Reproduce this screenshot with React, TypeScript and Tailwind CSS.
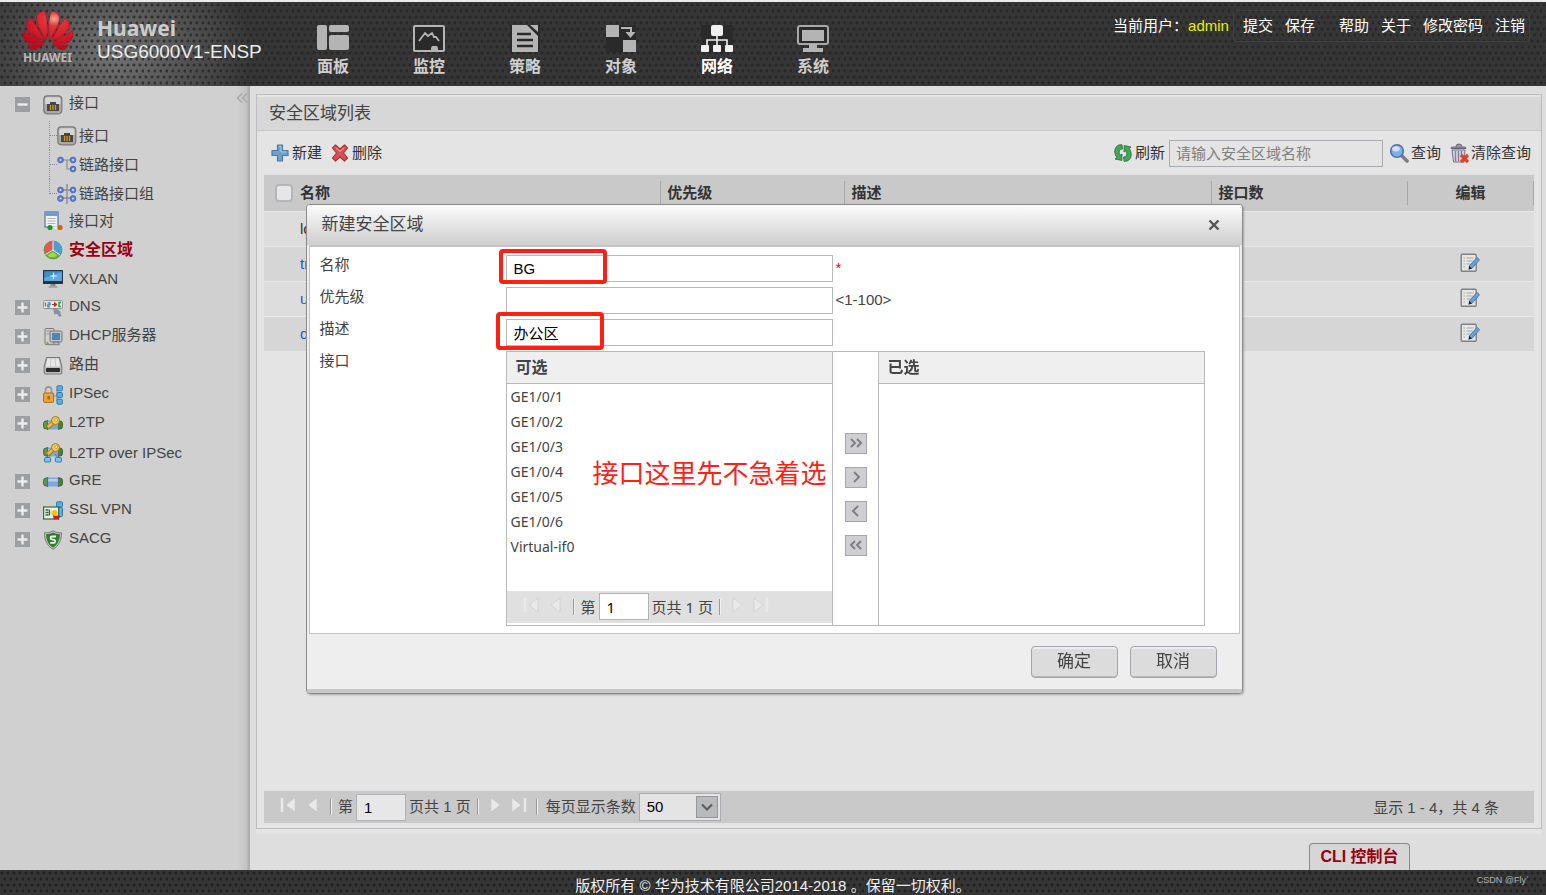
import React, { ReactNode } from "react";

const DOTS =
  "bg-[#353536] bg-[radial-gradient(circle_at_2px_3px,#202020_1px,transparent_2px),radial-gradient(circle_at_5px_9px,#202020_1px,transparent_2px)] bg-[length:6px_12px]";
const HEADER_DOTS =
  "bg-[#363637] bg-[radial-gradient(circle_at_2px_3px,#202020b0_1px,transparent_2px),radial-gradient(circle_at_5px_9px,#202020b0_1px,transparent_2px),radial-gradient(ellipse_140px_110px_at_112px_50px,#747474,transparent)] bg-[length:6px_12px,6px_12px,100%_100%]";

/* ---------- top navigation drawings ---------- */

function HuaweiLogo() {
  return (
    <svg width="50" height="39" viewBox="0 2.9 24 18.2" preserveAspectRatio="none" aria-hidden="true">
      <defs>
        <radialGradient id="petal" cx="0.62" cy="0.2" r="0.75">
          <stop offset="0" stopColor="#f3a78e" />
          <stop offset="0.25" stopColor="#e0343a" />
          <stop offset="1" stopColor="#c2071a" />
        </radialGradient>
      </defs>
      <path
        fill="url(#petal)"
        stroke="#c2071a"
        strokeWidth="0.3"
        d="M3.67 6.14S1.82 7.91 1.72 9.78v.35c.08 1.51 1.22 2.4 1.22 2.4 1.83 1.79 6.26 4.04 7.3 4.55 0 0 .06.03.1-.01l.02-.04v-.04C7.52 10.8 3.67 6.14 3.67 6.14zM9.65 18.6c-.02-.08-.1-.08-.1-.08l-7.38.26c.8 1.43 2.15 2.53 3.56 2.2.96-.25 3.16-1.78 3.88-2.3.06-.05.04-.09.04-.09zm.08-.78C6.49 15.63.21 12.28.21 12.28c-.15.46-.2.9-.21 1.3v.07c0 1.07.4 1.82.4 1.82.8 1.69 2.34 2.2 2.34 2.2.7.3 1.4.31 1.4.31.12.02 4.4 0 5.54 0 .05 0 .08-.05.08-.05v-.06c0-.03-.03-.05-.03-.05zM9.06 3.19a3.42 3.42 0 00-2.57 3.15v.41c.03.6.16 1.05.16 1.05.66 2.9 3.86 7.65 4.55 8.65.05.05.1.03.1.03a.1.1 0 00.06-.1c1.06-10.6-1.11-13.42-1.11-13.42-.32.02-1.19.23-1.19.23zm8.299 2.27s-.49-1.8-2.44-2.28c0 0-.57-.14-1.17-.22 0 0-2.18 2.81-1.12 13.43.01.07.06.08.06.08.07.03.1-.03.1-.03.72-1.03 3.9-5.76 4.55-8.64 0 0 .36-1.4.02-2.34zm-2.92 13.07s-.07 0-.09.05c0 0-.01.07.03.1.7.51 2.85 2 3.88 2.3 0 0 .16.05.43.06h.14c.69-.02 1.9-.37 3-2.26l-7.4-.25zm7.83-8.41c.14-2.06-1.94-3.97-1.94-3.98 0 0-3.85 4.66-6.67 10.8 0 0-.03.08.02.13l.04.01h.06c1.06-.53 5.46-2.77 7.28-4.54 0 0 1.15-.93 1.21-2.42zm1.52 2.14s-6.28 3.37-9.52 5.55c0 0-.05.04-.03.11 0 0 .03.06.07.06 1.16 0 5.56 0 5.67-.02 0 0 .57-.02 1.27-.29 0 0 1.56-.5 2.37-2.27 0 0 .73-1.45.17-3.14z"
      />
    </svg>
  );
}

function NavSvg({ children }: { children: ReactNode }) {
  return (
    <svg width="34" height="28" viewBox="0 0 34 28" fill="#b4b4b4" aria-hidden="true">
      {children}
    </svg>
  );
}

const navItems = [
  {
    label: "面板",
    icon: (
      <NavSvg>
        <rect x="1" y="0" width="10" height="25" rx="2" />
        <rect x="13" y="0" width="20" height="7" rx="2" />
        <rect x="13" y="10" width="20" height="15" rx="2" />
      </NavSvg>
    ),
  },
  {
    label: "监控",
    icon: (
      <NavSvg>
        <rect x="2" y="1" width="30" height="25" rx="1" fill="#2a2a2a" stroke="#b4b4b4" strokeWidth="2" />
        <path d="M7 16l6-8 3 3 4-3 2 4h2l3 4" fill="none" stroke="#b4b4b4" strokeWidth="1.8" />
        <path d="M19 25v-2l1-2h5l1 2v2z" />
      </NavSvg>
    ),
  },
  {
    label: "策略",
    icon: (
      <NavSvg>
        <rect x="2" y="0" width="30" height="27" fill="#2a2a2a" />
        <path d="M4 0h15l11 11v16H4zM22 0h8v7z" />
        <path d="M9 9h14M9 15h16M9 21h16" stroke="#2a2a2a" strokeWidth="2.4" />
      </NavSvg>
    ),
  },
  {
    label: "对象",
    icon: (
      <NavSvg>
        <rect x="2" y="0" width="30" height="27" fill="#2a2a2a" />
        <rect x="2" y="0" width="13" height="12" />
        <rect x="19" y="15" width="13" height="12" />
        <path d="M17 2h11v5h3.500l-5 6-5-6H26V4h-9z" />
      </NavSvg>
    ),
  },
  {
    label: "网络",
    active: true,
    icon: (
      <NavSvg>
        <rect x="1" y="0" width="32" height="27" fill="#2a2a2a" />
        <g fill="#f0f0f0">
          <rect x="11" y="0" width="12" height="11" rx="2" />
          <rect x="1" y="20" width="8" height="7" rx="1" />
          <rect x="13" y="20" width="8" height="7" rx="1" />
          <rect x="25" y="20" width="8" height="7" rx="1" />
        </g>
        <path d="M17 10v11M7 21v-6h20v6" fill="none" stroke="#f0f0f0" strokeWidth="1.6" />
      </NavSvg>
    ),
  },
  {
    label: "系统",
    icon: (
      <NavSvg>
        <rect x="2" y="1" width="30" height="18" rx="2" fill="#2a2a2a" stroke="#a8a8a8" strokeWidth="2" />
        <rect x="6" y="5" width="22" height="11" />
        <path d="M13 19h8v4h6v4H7v-4h6z" />
      </NavSvg>
    ),
  },
];

/* ---------- sidebar drawings ---------- */

function Icon({ children }: { children: ReactNode }) {
  return (
    <svg className="shrink-0" width="20" height="20" viewBox="0 0 20 20" aria-hidden="true">
      {children}
    </svg>
  );
}

const PortIcon = () => (
  <Icon>
    <rect x="0.800" y="0.800" width="18" height="18" rx="3.500" fill="#a9a9a9" stroke="#7a7a7a" strokeWidth="1.2" />
    <path d="M2.200 9V4.200a2 2 0 012-2h11.200a2 2 0 012 2V9z" fill="#d6d6d6" />
    <path d="M4 9h3V7h6v2h3v7H4z" fill="#4a4640" />
    <path d="M7.500 10v5M10 10v5M12.500 10v5" stroke="#c99a2c" strokeWidth="1.3" />
  </Icon>
);

const Node = ({ x, y }: { x: number; y: number }) => (
  <g>
    <circle cx={x} cy={y} r="2.900" fill="#5b7fd6" stroke="#4765b4" strokeWidth="0.8" />
    <circle cx={x} cy={y} r="1.100" fill="#cfdcff" />
  </g>
);

const LinkIcon = () => (
  <Icon>
    <path d="M4 5h12M10 5v9h6" fill="none" stroke="#8c8c8c" strokeWidth="1.2" />
    <Node x={3.5} y={5} />
    <Node x={16} y={5} />
    <Node x={16} y={14} />
  </Icon>
);

const LinkGroupIcon = () => (
  <Icon>
    <path d="M10 0v20M5 6h10M5 14h10" fill="none" stroke="#8c8c8c" strokeWidth="1.4" />
    <Node x={3.5} y={6} />
    <Node x={16} y={6} />
    <Node x={3.5} y={14.5} />
    <Node x={16} y={14.5} />
  </Icon>
);

const PairIcon = () => (
  <Icon>
    <rect x="2" y="1" width="13" height="15" fill="#f2f2f2" stroke="#5b7fab" strokeWidth="1.3" />
    <rect x="2" y="1" width="13" height="4" fill="#6f9bcf" />
    <path d="M4.500 7.500h8M4.500 10h8M4.500 12.500h8" stroke="#b5b5b5" />
    <path d="M7 16.500h9" stroke="#f4f4f4" strokeWidth="2" />
    <circle cx="7" cy="16.500" r="2.600" fill="#109a2a" />
    <circle cx="17" cy="16.500" r="2.600" fill="#d2640c" />
  </Icon>
);

const PieIcon = () => (
  <Icon>
    <circle cx="10" cy="10" r="9" fill="#5fb530" stroke="#4c7a3a" strokeWidth="0.6" />
    <path d="M10 10L2.600 14.500A9 9 0 0110 1z" fill="#df5a4e" />
    <path d="M10 10V1a9 9 0 017.200 14.200z" fill="#4b9fd8" />
    <path d="M10 10V1M10 10l-7.500 4.500M10 10l7 5" stroke="#e9eef0" strokeWidth="1" />
    <path d="M4.500 15.500l5.500-3.500 4 3.500a7 7 0 01-9.500 0z" fill="#a3d94c" />
  </Icon>
);

const ScreenIcon = () => (
  <Icon>
    <rect x="0" y="1" width="20" height="14" rx="0.500" fill="#26343f" />
    <rect x="1.200" y="2.200" width="17.600" height="9.800" fill="#3d8fcb" />
    <path d="M1.200 9L18.800 3v9H1.200z" fill="#5aabe0" />
    <path d="M10.500 3.800v6.400M7.300 7h6.400" stroke="#e6f4ff" strokeWidth="1.200" />
    <path d="M7.500 15h5v2.500h-5z" fill="#8b8b8b" />
    <rect x="5.500" y="17" width="9" height="1.800" fill="#a5a5a5" />
  </Icon>
);

const DnsIcon = () => (
  <Icon>
    <rect x="0.600" y="2.600" width="18.800" height="8" rx="1" fill="#ededed" stroke="#8f8f8f" />
    <path d="M2.500 4.500v4M4.500 4.800h2.500v2H4.800v2H7" stroke="#2d7fbb" strokeWidth="1.200" fill="none" />
    <path d="M9 6.500h4M11.500 4.500L14 6.500l-2.500 2z" stroke="#c3281f" strokeWidth="1" fill="#c3281f" />
    <path d="M18 4.500h-2v4h2" stroke="#2e9c3f" strokeWidth="1.500" fill="none" />
    <path d="M10 11l3-1 4 3 1.500 5-2 1-2.500-3-2.500.500z" fill="#8d91a3" />
  </Icon>
);

const DhcpIcon = () => (
  <Icon>
    <rect x="2" y="1.500" width="9" height="16" rx="1" fill="#d0d0d0" stroke="#7b7b7b" />
    <path d="M3.500 4h5M3.500 7h3" stroke="#8d8d8d" />
    <rect x="7" y="4" width="12" height="11" rx="1.500" fill="#c2c2c2" stroke="#777" />
    <rect x="9" y="6" width="8" height="7" fill="#4e86b8" />
    <path d="M10 15h6v2.500H4.500" fill="none" stroke="#8a8a8a" strokeWidth="1.500" />
    <circle cx="4.500" cy="16" r="1.200" fill="#5fb53a" />
  </Icon>
);

const RouteIcon = () => (
  <Icon>
    <path d="M3.500 1.500h13l2.300 9v6a1.500 1.500 0 01-1.500 1.500H2.700a1.500 1.500 0 01-1.500-1.500v-6z" fill="#bdbdbd" stroke="#7a7a7a" strokeWidth="1.100" />
    <path d="M4.500 2.500h11l1.600 8H2.900z" fill="#e9e9e9" />
    <path d="M8 3l-.700 7M12 3l.700 7" stroke="#c4c4c4" />
    <rect x="3" y="12" width="14" height="4" rx="0.800" fill="#2d2d2d" />
  </Icon>
);

const LockIcon = () => (
  <Icon>
    <path d="M2.500 9V5a3 3 0 016 0v4" fill="none" stroke="#9a9a9a" strokeWidth="1.800" />
    <rect x="0.600" y="8" width="10" height="9.400" rx="1" fill="#e9a63a" stroke="#ad6f16" />
    <rect x="4.400" y="11" width="2.500" height="3.500" fill="#a86a17" />
    <path d="M11 11h3M14 4v13" stroke="#8e8e8e" strokeWidth="1.200" />
    <rect x="14" y="0.800" width="5.400" height="5" rx="1" fill="#58b1e2" stroke="#2a7cae" />
    <rect x="14" y="7.500" width="5.400" height="5" rx="1" fill="#58b1e2" stroke="#2a7cae" />
    <rect x="14" y="14.200" width="5.400" height="5" rx="1" fill="#58b1e2" stroke="#2a7cae" />
  </Icon>
);

const Tube = ({ y }: { y: number }) => (
  <g>
    <rect x="0.600" y={y} width="5" height="8" rx="2.500" fill="#5c9b4a" stroke="#3f6b34" />
    <rect x="14.400" y={y} width="5" height="8" rx="2.500" fill="#3c8f2a" stroke="#2c6320" />
    <rect x="4.500" y={y - 0.5} width="11" height="9" fill="#7ba9dd" />
    <rect x="4.500" y={y + 1} width="11" height="2.500" fill="#b1d0f1" />
    <path d={`M4.500 ${y - 1}v10M15.500 ${y - 1}v10`} stroke="#5e6a76" strokeWidth="1.200" />
  </g>
);

const Key = ({ y }: { y: number }) => (
  <g>
    <path d={`M4.500 ${y + 10.5}l7-6`} stroke="#a87612" strokeWidth="4.600" />
    <path d={`M4.800 ${y + 10}l7-6`} stroke="#f0bf45" strokeWidth="2.800" />
    <circle cx="12.500" cy={y + 3.5} r="4" fill="#f3cb5a" stroke="#a87612" />
    <circle cx="13.200" cy={y + 3} r="1.400" fill="#fff3c4" stroke="#a87612" strokeWidth="0.600" />
  </g>
);

const L2tpIcon = () => (
  <Icon>
    <Tube y={7} />
    <Key y={3} />
  </Icon>
);

const L2tpIpsecIcon = () => (
  <Icon>
    <Tube y={5} />
    <path d="M5 15l3-4M15 15l-3-4" stroke="#7f7f7f" />
    <Key y={1} />
    <rect x="1.600" y="14.500" width="6" height="4.500" rx="1" fill="#7cc4ea" stroke="#2a7cae" />
    <rect x="12.400" y="14.500" width="6" height="4.500" rx="1" fill="#7cc4ea" stroke="#2a7cae" />
  </Icon>
);

const GreIcon = () => (
  <Icon>
    <Tube y={6} />
  </Icon>
);

const SslIcon = () => (
  <Icon>
    <rect x="13.500" y="0.800" width="6" height="5" rx="1" fill="#58b1e2" stroke="#2a7cae" />
    <rect x="13.500" y="6.500" width="6" height="9" rx="1" fill="#58b1e2" stroke="#2a7cae" />
    <rect x="0.600" y="6" width="15" height="12" fill="#eef3ea" stroke="#2f6b45" strokeWidth="1.200" />
    <path d="M2.500 9h3M2.500 11.500h3M2.500 14h3M6.500 8.500v6" stroke="#2f6b45" strokeWidth="1.300" />
    <circle cx="11.500" cy="12" r="3" fill="#f4bd18" />
    <path d="M10 14.500l3 .500 3-1 1.500 2-2 1 .500 2-3-1.500L11 19z" fill="#d01515" />
  </Icon>
);

const ShieldIcon = () => (
  <Icon>
    <path d="M10 .800c3 1.800 5.500 2.200 8.500 2C18.500 10 16 16 10 19.300 4 16 1.500 10 1.500 2.800c3 .200 5.500-.200 8.500-2z" fill="#c9c9c9" stroke="#777" />
    <path d="M10 2.500c2.200 1.200 4.400 1.700 7 1.700C16.800 10 14.600 14.900 10 17.700 5.400 14.900 3.200 10 3 4.200 5.600 4.200 7.800 3.700 10 2.500z" fill="#2f7f27" />
    <path d="M13 6.500H8.800c-1.500 0-1.800 2.600 0 2.900l2.300.400c1.700.400 1.400 3-.200 3H7.200" fill="none" stroke="#f5f5f5" strokeWidth="1.800" />
  </Icon>
);

type MenuItem = { label: string; icon: ReactNode; expandable?: boolean; active?: boolean; children?: MenuItem[] };

const menu: MenuItem[] = [
  {
    label: "接口",
    icon: <PortIcon />,
    expandable: true,
    children: [
      { label: "接口", icon: <PortIcon /> },
      { label: "链路接口", icon: <LinkIcon /> },
      { label: "链路接口组", icon: <LinkGroupIcon /> },
    ],
  },
  { label: "接口对", icon: <PairIcon /> },
  { label: "安全区域", icon: <PieIcon />, active: true },
  { label: "VXLAN", icon: <ScreenIcon /> },
  { label: "DNS", icon: <DnsIcon />, expandable: true },
  { label: "DHCP服务器", icon: <DhcpIcon />, expandable: true },
  { label: "路由", icon: <RouteIcon />, expandable: true },
  { label: "IPSec", icon: <LockIcon />, expandable: true },
  { label: "L2TP", icon: <L2tpIcon />, expandable: true },
  { label: "L2TP over IPSec", icon: <L2tpIpsecIcon /> },
  { label: "GRE", icon: <GreIcon />, expandable: true },
  { label: "SSL VPN", icon: <SslIcon />, expandable: true },
  { label: "SACG", icon: <ShieldIcon />, expandable: true },
];

function Expander({ open }: { open: boolean }) {
  return (
    <button type="button" aria-label={open ? "收起" : "展开"} className="h-[15px] w-[15px] bg-[#9b9fa2]">
      <svg width="15" height="15" viewBox="0 0 15 15" aria-hidden="true">
        <path d={open ? "M2.500 7.500h10" : "M2.500 7.500h10M7.500 2.500v10"} stroke="#ececec" strokeWidth="2.400" />
      </svg>
    </button>
  );
}

function Sidebar() {
  return (
    <nav className="relative w-[250px] shrink-0 bg-[#d0d0d0] bg-[linear-gradient(to_right,transparent_238px,#c2c2c2_247px,#b0b0b0_248px)] pt-1">
      <button type="button" aria-label="折叠菜单" className="absolute top-[6px] right-[2px] h-3 w-3">
        <svg width="12" height="12" viewBox="0 0 12 12" fill="none" stroke="#a9a9a9" strokeWidth="1.500" aria-hidden="true">
          <path d="M6 1.500L1.500 6 6 10.500M11 1.500L6.500 6l4.500 4.500" />
        </svg>
      </button>
      <ul>
        {menu.map((item) => (
          <li key={item.label}>
            <div className="flex h-[29px] items-center pl-[15px]">
              <span className="flex w-7 shrink-0">{item.expandable && <Expander open={!!item.children} />}</span>
              {item.icon}
              <a
                href="#"
                className={
                  item.active
                    ? "pl-[6px] text-[16px] font-bold text-[#9a0010]"
                    : item.expandable
                      ? "pb-1 pl-[6px]"
                      : "pl-[6px]"
                }
              >
                {item.label}
              </a>
            </div>
            {item.children && (
              <ul className="-mb-[2px] ml-[49px] pt-[2px]">
                {item.children.map((c) => (
                  <li
                    key={c.label}
                    className="relative flex h-[29px] items-center before:absolute before:top-0 before:left-0 before:h-full before:border-l before:border-dotted before:border-[#8a8a8a] last:before:h-1/2"
                  >
                    <span className="w-2 shrink-0 border-t border-dotted border-[#8a8a8a]" />
                    {c.icon}
                    <a href="#" className="pl-[2px]">
                      {c.label}
                    </a>
                  </li>
                ))}
              </ul>
            )}
          </li>
        ))}
      </ul>
    </nav>
  );
}

/* ---------- toolbar drawings ---------- */

const AddIcon = () => (
  <Icon>
    <path d="M7.500 2h5v5.500H18v5h-5.500V18h-5v-5.500H2v-5h5.500z" fill="#6f9fcb" stroke="#4c7ba8" strokeWidth="1.200" strokeLinejoin="round" />
    <path d="M9 3.500h2v5.500h5.500" fill="none" stroke="#a9cbe8" />
  </Icon>
);
const DeleteIcon = () => (
  <Icon>
    <path d="M2.500 5l3-3L10 6l4.500-4 3 3-4 5 4 5-3 3-4.500-4-4.500 4-3-3 4-5z" fill="#d45050" stroke="#ac3434" strokeWidth="1.200" strokeLinejoin="round" />
    <path d="M5.500 4.500L10 8.500l4.500-4" fill="none" stroke="#e88a8a" strokeWidth="1.200" />
  </Icon>
);
const RefreshIcon = () => (
  <Icon>
    <g fill="#43a45a" stroke="#1f6e35" strokeWidth="0.800" strokeLinejoin="round">
      <path d="M9 1.800C4.500 1 1.500 4.500 1.800 9c.100 2.300 1 4.200 2.200 5.500l-2 1.500 6.800 1.500.200-6.500-2 1.200C5.500 9.500 6 6 9.500 6z" />
      <path d="M11 18.200c4.500.800 7.500-2.700 7.200-7.200-.100-2.300-1-4.200-2.200-5.500l2-1.500-6.800-1.500-.200 6.500 2-1.200c1.500 2.700 1 6.200-2.500 6.200z" />
    </g>
  </Icon>
);
const SearchIcon = () => (
  <Icon>
    <path d="M12 12l6 6" stroke="#7d7d88" strokeWidth="3.600" strokeLinecap="round" />
    <circle cx="8" cy="8" r="6.300" fill="#7fb0ea" stroke="#5570a8" strokeWidth="1.600" />
    <ellipse cx="7" cy="5.800" rx="3.800" ry="2.600" fill="#cfe2fa" />
  </Icon>
);
const TrashIcon = () => (
  <Icon>
    <path d="M7 3.500a3 2.500 0 016 0M2 5.500c0-1 .500-1.500 1.500-1.500h12c1 0 1.500.500 1.500 1.500z" fill="#9a9ab0" stroke="#62627a" />
    <path d="M3 7h13l-1 12H4.500z" fill="#d3d3e2" stroke="#70708c" />
    <path d="M6.500 8v10M9.500 8v10M12.500 8v5" stroke="#80809c" strokeWidth="1.300" />
    <path d="M12 12l7 7M19 12l-7 7" stroke="#dd4426" strokeWidth="3.200" />
  </Icon>
);
const EditIcon = () => (
  <Icon>
    <rect x="1.200" y="1.200" width="15" height="17" rx="1" fill="#e6e6e3" stroke="#7c8088" strokeWidth="1.400" />
    <path d="M3.500 5h1.500M6.500 5h7M3.500 8h1.500M6.500 8h6M3.500 11h1.500M6.500 11h4M3.500 14h1.500" stroke="#a4a8ad" strokeWidth="1.100" />
    <path d="M17 4.300l2.500 2.500-7.500 8.700-3-2.300z" fill="#6b9fd0" stroke="#3f6f9f" strokeWidth="0.800" />
    <path d="M9 13l3 2.500-3.500 1.200z" fill="#16202b" />
  </Icon>
);

function ToolButton({ icon, label }: { icon: ReactNode; label: string }) {
  return (
    <button type="button" className="flex items-center gap-[2px] whitespace-nowrap text-[#333]">
      {icon}
      {label}
    </button>
  );
}

/* ---------- pager ---------- */

function PagerArrow({ label, path, bar }: { label: string; path: string; bar?: string }) {
  return (
    <button type="button" aria-label={label} className="mb-1">
      <svg width={bar ? 16 : 10} height="14" viewBox={bar ? "0 0 16 14" : "0 0 10 14"} aria-hidden="true">
        <path d={path} fill="#e9e9e9" stroke="#c4c4c4" strokeWidth="0.500" />
        {bar && <path d={bar} stroke="#e9e9e9" strokeWidth="2.500" />}
      </svg>
    </button>
  );
}

const PagerSeparator = () => <span className="h-4 w-[2px] border-r border-l border-r-[#f0f0f0] border-l-[#9a9a9a]" />;

function Pager({ id, children }: { id: string; children?: ReactNode }) {
  return (
    <div className="flex items-center text-[15px] whitespace-nowrap">
      <div className="flex items-center gap-3 pr-[6px]">
        <PagerArrow label="首页" path="M15 0v14L6 7z" bar="M2 0v14" />
        <PagerArrow label="上一页" path="M9 0v14L0 7z" />
        <PagerSeparator />
      </div>
      <label htmlFor={id}>第</label>
      <input
        id={id}
        defaultValue="1"
        className="mx-[3px] h-[27px] w-[50px] border border-[#b0b2b8] bg-white/55 pl-[7px] text-black"
      />
      <span>页共 1 页</span>
      <div className="flex items-center gap-[11px] pl-[6px]">
        <PagerSeparator />
        <PagerArrow label="下一页" path="M1 0v14l9-7z" />
        <PagerArrow label="末页" path="M1 0v14l9-7z" bar="M14 0v14" />
      </div>
      {children}
    </div>
  );
}

/* ---------- zone list ---------- */

const zones = [
  { name: "local", editable: false },
  { name: "trust", editable: true },
  { name: "untrust", editable: true },
  { name: "dmz", editable: true },
];

const headCell = "block h-6 border-l border-[#a8a8a8] pl-[6px] text-left leading-6";

function ZoneTable() {
  return (
    <table className="w-full table-fixed border-collapse text-[#333]">
      <thead>
        <tr className="h-9 bg-[#c9c9c9] font-bold">
          <th className="w-[31.2%] p-0">
            <span className="flex items-center gap-[7px] pl-[11px]">
              <input
                type="checkbox"
                id="all-zones"
                className="h-[18px] w-[18px] appearance-none rounded-sm border-2 border-[#b3b6ba] bg-[#e6e6e6]"
              />
              <label htmlFor="all-zones">名称</label>
            </span>
          </th>
          <th className="w-[14.5%] p-0">
            <span className={headCell}>优先级</span>
          </th>
          <th className="w-[28.9%] p-0">
            <span className={headCell}>描述</span>
          </th>
          <th className="w-[15.4%] p-0">
            <span className={headCell}>接口数</span>
          </th>
          <th className="p-0">
            <span className="block h-6 border-r border-l border-[#a8a8a8] text-center leading-6">编辑</span>
          </th>
        </tr>
      </thead>
      <tbody>
        {zones.map((z) => (
          <tr key={z.name} className="h-[35px] border-t border-[#e8e8e8] odd:bg-[#dddddd] even:bg-[#d6d6d6]">
            <td className="py-0 pl-9">
              {z.editable ? (
                <a href="#" className="text-[#1459d9]">
                  {z.name}
                </a>
              ) : (
                z.name
              )}
            </td>
            <td />
            <td />
            <td />
            <td className="p-0">
              {z.editable && (
                <button type="button" aria-label={`编辑 ${z.name}`} className="mx-auto block pb-px">
                  <EditIcon />
                </button>
              )}
            </td>
          </tr>
        ))}
      </tbody>
    </table>
  );
}

/* ---------- dialog ---------- */

const fieldInput = "h-[27px] w-[327px] border border-[#b9b9c0] bg-white pl-[7px] text-black";

const ports = ["GE1/0/1", "GE1/0/2", "GE1/0/3", "GE1/0/4", "GE1/0/5", "GE1/0/6", "Virtual-if0"];

const moves = [
  { label: "全部添加", path: "M5 5l4 4-4 4M11 5l4 4-4 4" },
  { label: "添加", path: "M8 4l5 5-5 5" },
  { label: "移除", path: "M12 4L7 9l5 5" },
  { label: "全部移除", path: "M9 5L5 9l4 4M15 5l-4 4 4 4" },
];

function Mark({ className }: { className: string }) {
  return <div className={`pointer-events-none absolute rounded-[4px] border-4 border-[#ff1f14] ${className}`} />;
}

function ZoneDialog() {
  return (
    <div className="fixed inset-0 flex items-center justify-center pt-0.5 pl-0.5">
      <section
        role="dialog"
        aria-labelledby="dialog-title"
        className="relative w-[937px] rounded-[4px] border border-[#8c8c8c] bg-[#eeeeee] shadow-[1px_1px_2px_#00000040]"
      >
        <header className="flex h-10 items-center justify-between rounded-t-[3px] bg-linear-to-b from-[#fbfbfb] to-[#cfcfcf] pr-[22px] pl-[15px]">
          <h2 id="dialog-title" className="text-[17px] text-[#444]">
            新建安全区域
          </h2>
          <button type="button" aria-label="关闭">
            <svg width="12" height="12" viewBox="0 0 12 12" aria-hidden="true">
              <path d="M1.500 1.500l9 9M10.500 1.500l-9 9" stroke="#555" strokeWidth="2.400" />
            </svg>
          </button>
        </header>

        <div className="mx-[2px] grid grid-cols-[186px_1fr] gap-y-[5px] border-x border-t-2 border-b border-[#c4c4c4] bg-white pt-2 pr-[34px] pb-[7px] pl-[10px]">
          <label htmlFor="name" className="leading-[19px]">
            名称
          </label>
          <div className="flex items-center gap-[3px]">
            <input id="name" defaultValue="BG" className={fieldInput} />
            <span className="text-[#ff0000]">*</span>
          </div>
          <label htmlFor="priority" className="leading-[19px]">
            优先级
          </label>
          <div className="flex items-center gap-[3px]">
            <input id="priority" className={fieldInput} />
            <span>&lt;1-100&gt;</span>
          </div>
          <label htmlFor="desc" className="leading-[19px]">
            描述
          </label>
          <div>
            <input id="desc" defaultValue="办公区" className={`block ${fieldInput}`} />
          </div>
          <span className="leading-[19px]">接口</span>
          <div className="grid h-[275px] grid-cols-[327px_45px_1fr] border border-l-0 border-[#b9b9c0]">
            <div className="flex flex-col border-x border-[#b9b9c0] font-['Noto_Sans','Noto_Sans_CJK_SC',sans-serif] text-[14px]">
              <h3 className="h-8 border-b border-[#b9b9c0] bg-[#efefef] pl-[9px] text-[16px] leading-[31px] font-bold">可选</h3>
              <ul className="flex-1">
                {ports.map((p) => (
                  <li key={p} className="h-[25px] pl-1 leading-[25px]">
                    {p}
                  </li>
                ))}
              </ul>
              <div className="mb-[2px] flex h-8 items-center bg-[#e0e0e0] pl-4 [&_input]:bg-white">
                <Pager id="port-page" />
              </div>
            </div>
            <div className="flex flex-col items-center gap-[13px] pt-[81px] pl-px">
              {moves.map((m) => (
                <button
                  key={m.label}
                  type="button"
                  aria-label={m.label}
                  className="h-[21px] w-[22px] border border-[#a5a6ae] bg-[#cfcfd1]"
                >
                  <svg width="20" height="19" viewBox="0 0 20 19" fill="none" stroke="#7f8087" strokeWidth="2" aria-hidden="true">
                    <path d={m.path} />
                  </svg>
                </button>
              ))}
            </div>
            <div className="border-l border-[#b9b9c0]">
              <h3 className="h-8 border-b border-[#b9b9c0] bg-[#efefef] pl-[9px] text-[16px] leading-[31px] font-bold">已选</h3>
            </div>
          </div>
        </div>

        <footer className="flex h-[59px] justify-end gap-3 rounded-b-[3px] border-b-4 border-[#c8c8c8] pt-3 pr-[25px]">
          {["确定", "取消"].map((t) => (
            <button
              key={t}
              type="button"
              className="h-8 w-[87px] rounded-sm border border-[#a5a6ae] bg-[#dcdcdc] text-[17px] leading-none shadow-[inset_0_2px_0_#ececec,inset_0_-1px_0_#b8b8bc]"
            >
              {t}
            </button>
          ))}
        </footer>

        <Mark className="top-[44px] left-[192px] h-[35px] w-[108px]" />
        <Mark className="top-[107px] left-[189px] h-[38px] w-[108px]" />
        <p className="pointer-events-none absolute top-[251px] left-[286px] text-[26px] leading-9 whitespace-nowrap text-[#ff1f14]">
          接口这里先不急着选
        </p>
      </section>
    </div>
  );
}

/* ---------- page ---------- */

export default function App() {
  return (
    <div className="flex min-h-screen flex-col bg-[#dedede] font-['Liberation_Sans','Noto_Sans_CJK_SC',sans-serif] text-[15px] leading-5 text-[#444]">
      <header className={`flex h-[86px] items-start border-t-2 border-[#e9eaec] ${HEADER_DOTS}`}>
        <div className="flex w-[285px] shrink-0 pt-[9px] pl-[23px]">
          <div className="w-[74px]">
            <HuaweiLogo />
            <div className="font-['Noto_Sans',sans-serif] text-[12px] leading-4 font-bold text-[#b8b8b8]">HUAWEI</div>
          </div>
          <div className="pt-1 whitespace-nowrap">
            <div className="font-['Noto_Sans',sans-serif] text-[21px] leading-[26px] font-bold text-[#cccccc]">Huawei</div>
            <div className="text-[19px] leading-[22px] text-[#ececec]">USG6000V1-ENSP</div>
          </div>
        </div>
        <nav className="flex pt-[23px]">
          {navItems.map((n) => (
            <a
              key={n.label}
              href="#"
              className={`flex w-24 flex-col items-center gap-1 text-[16px] font-bold ${n.active ? "text-white" : "text-[#cfcfcf]"}`}
            >
              {n.icon}
              {n.label}
            </a>
          ))}
        </nav>
        <div className="mt-2 mr-4 ml-auto flex items-center whitespace-nowrap text-white">
          <span>当前用户：</span>
          <span className="mr-1 text-[#e8f000]">admin</span>
          <div className="flex h-8 items-center gap-3 rounded-sm border border-[#414142] pr-1 pl-[9px]">
            <a href="#">提交</a>
            <a href="#" className="mr-3">
              保存
            </a>
            <a href="#">帮助</a>
            <a href="#">关于</a>
            <a href="#">修改密码</a>
            <a href="#">注销</a>
          </div>
        </div>
      </header>

      <div className="flex flex-1">
        <Sidebar />
        <main className="flex min-w-0 flex-1 flex-col pt-2 pr-1 pl-[6px]">
          <section className="flex flex-1 flex-col border border-[#bdbdbd] bg-[#e4e4e4] shadow-[0_5px_0_#e4e4e4]">
            <h1 className="h-9 border-t-2 border-b border-t-[#e4e4e4] border-b-[#c9c9c9] bg-[#d7d7d7] pl-3 text-[17px] leading-[34px] text-[#444]">
              安全区域列表
            </h1>
            <div className="flex h-11 items-center gap-2 pr-[10px] pl-[13px]">
              <ToolButton icon={<AddIcon />} label="新建" />
              <ToolButton icon={<DeleteIcon />} label="删除" />
              <div className="ml-auto flex items-center">
                <ToolButton icon={<RefreshIcon />} label="刷新" />
                <input
                  aria-label="安全区域名称"
                  placeholder="请输入安全区域名称"
                  className="mr-[6px] ml-1 h-[27px] w-[214px] border border-[#a9abb0] bg-[#e4e4e4] pl-[6px] placeholder:text-[#808080]"
                />
                <div className="flex gap-2">
                  <ToolButton icon={<SearchIcon />} label="查询" />
                  <ToolButton icon={<TrashIcon />} label="清除查询" />
                </div>
              </div>
            </div>
            <div className="flex-1 px-[7px]">
              <ZoneTable />
            </div>
            <div className="mx-[7px] mb-[5px] flex h-8 items-center justify-between bg-[#c9c9c9] pr-[35px] pl-4">
              <Pager id="zone-page">
                <div className="flex items-center gap-2 pl-[9px]">
                  <PagerSeparator />
                  <label htmlFor="page-size">每页显示条数</label>
                </div>
                <div className="relative ml-[3px]">
                  <select
                    id="page-size"
                    defaultValue="50"
                    className="block h-7 w-[82px] appearance-none border border-[#a9abb0] bg-[#e4e4e4] pl-[7px] text-black"
                  >
                    <option>50</option>
                  </select>
                  <svg
                    className="pointer-events-none absolute top-[3px] right-[3px]"
                    width="22"
                    height="22"
                    viewBox="0 0 22 22"
                    fill="none"
                    aria-hidden="true"
                  >
                    <rect x="0.500" y="0.500" width="21" height="21" fill="#b9babc" stroke="#94979b" />
                    <path d="M6 8.500l5 5 5-5" stroke="#5c5f63" strokeWidth="2.200" />
                  </svg>
                </div>
              </Pager>
              <span className="pt-0.5 whitespace-nowrap">显示 1 - 4，共 4 条</span>
            </div>
          </section>
          <div className="flex justify-end pt-[14px] pr-[132px]">
            <button
              type="button"
              className="h-[27px] w-[101px] rounded-t-[4px] border border-b-0 border-[#8a8a8a] bg-[#d6d6d6] text-[16px] leading-none font-bold whitespace-nowrap text-[#9a0010]"
            >
              CLI 控制台
            </button>
          </div>
        </main>
      </div>

      <footer className={`relative h-[25px] overflow-hidden pt-[6px] text-center text-[#f0f0f0] ${DOTS}`}>
        版权所有 © 华为技术有限公司2014-2018 。保留一切权利。
        <span className="absolute top-0 right-[17px] text-[9px] text-[#b0b0b0]">CSDN @Fly`</span>
      </footer>

      <ZoneDialog />
    </div>
  );
}
